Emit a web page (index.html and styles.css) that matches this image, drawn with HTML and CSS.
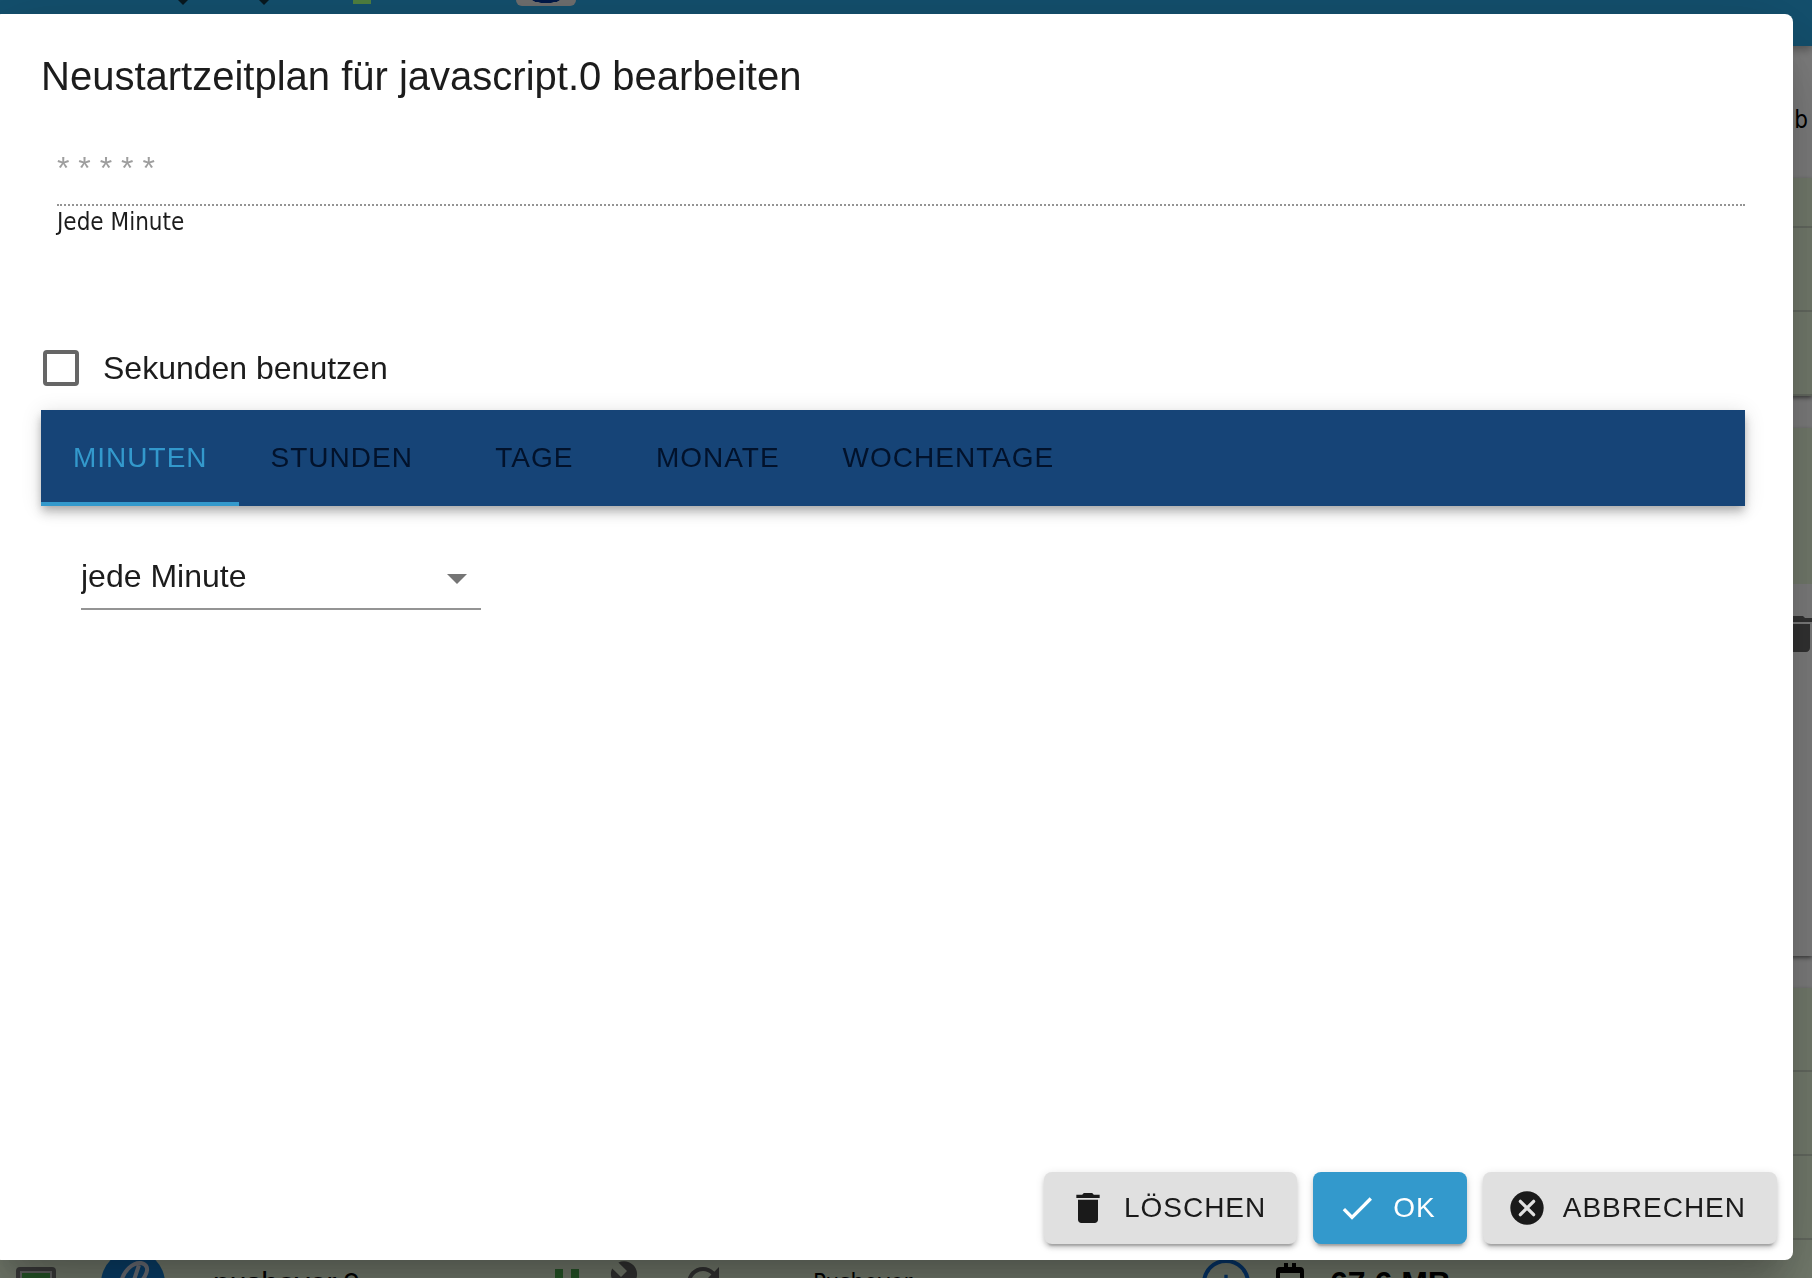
FILE: index.html
```html
<!DOCTYPE html>
<html lang="de">
<head>
  <title>Neustartzeitplan</title>
  <meta charset="UTF-8">
  <meta name="viewport" content="width=device-width, initial-scale=1">
  <link rel="stylesheet" href="styles.css">
</head>
<body>
  <!-- Instanzliste -->
  <div class="page" aria-hidden="true">
    <div class="toolbar">
      <svg class="tool-arrow" viewBox="0 0 10 5"><path d="M0 0h10L5 5z"/></svg>
      <svg class="tool-arrow" viewBox="0 0 10 5"><path d="M0 0h10L5 5z"/></svg>
      <span class="tool-status"></span>
      <span class="tool-logo"></span>
    </div>
    <div class="list-head">b</div>
    <div class="list">
      <div class="row row-short"></div>
      <div class="row"></div>
      <div class="row"></div>
    </div>
    <div class="list list-open">
      <div class="row row-tall"></div>
      <div class="row-details">
        <svg class="icon" viewBox="0 0 24 24"><path d="M6 19c0 1.1.9 2 2 2h8c1.1 0 2-.9 2-2V7H6v12zM19 4h-3.500l-1-1h-5l-1 1H5v2h14V4z"/></svg>
      </div>
    </div>
    <div class="list">
      <div class="row"></div>
      <div class="row"></div>
      <div class="row"></div>
      <div class="row instance">
        <span class="led"></span>
        <svg class="adapter-logo" viewBox="0 0 64 64">
          <circle cx="32" cy="32" r="32" fill="#1280d8"/>
          <path d="M20 32c2-12 12-21 20-20 6 1 8 6 4 13-3 6-9 9-14 9M38 14 26 50" fill="none" stroke="#dfe6f5" stroke-width="4"/>
        </svg>
        <span class="instance-name">pushover.0</span>
        <svg class="icon icon-pause" viewBox="0 0 24 24"><path d="M6 19h4V5H6v14zm8-14v14h4V5h-4z"/></svg>
        <svg class="icon" viewBox="0 0 24 24"><path d="M22.700 19l-9.100-9.100c.9-2.300.4-5-1.500-6.900-2-2-5-2.400-7.400-1.300L9 6 6 9 1.600 4.700C.4 7.100.9 10.100 2.900 12.100c1.900 1.900 4.600 2.400 6.900 1.500l9.100 9.100c.4.4 1 .4 1.400 0l2.300-2.300c.5-.4.5-1.100.1-1.400z"/></svg>
        <svg class="icon" viewBox="0 0 24 24"><path d="M17.650 6.350C16.200 4.900 14.210 4 12 4c-4.420 0-7.990 3.580-7.990 8s3.570 8 7.990 8c3.730 0 6.840-2.550 7.730-6h-2.080c-.82 2.330-3.040 4-5.650 4-3.310 0-6-2.690-6-6s2.690-6 6-6c1.660 0 3.140.69 4.220 1.780L13 11h7V4l-2.350 2.350z"/></svg>
        <span class="instance-title">Pushover</span>
        <span class="info">
          <svg viewBox="0 0 24 24"><path d="M11 7h2v2h-2zM11 11h2v6h-2z"/></svg>
        </span>
        <svg class="icon icon-memory" viewBox="0 0 24 24"><path d="M7 2h2v2h2V2h2v2h2a2 2 0 0 1 2 2v12a2 2 0 0 1-2 2H5a2 2 0 0 1-2-2V6a2 2 0 0 1 2-2h2zM5 7v11h10V7z"/></svg>
        <span class="memory">67.6 MB</span>
      </div>
    </div>
  </div>

  <!-- Dialog -->
  <div class="backdrop">
    <form class="dialog" role="dialog" aria-labelledby="dialogTitle">
      <h2 class="dialog-title" id="dialogTitle">Neustartzeitplan für javascript.0 bearbeiten</h2>

      <div class="dialog-content">
        <div class="cron-field">
          <input type="text" class="cron-input" id="cron" value="* * * * *" aria-label="Cron" aria-describedby="cronText" disabled>
          <p class="cron-text" id="cronText">Jede Minute</p>
        </div>

        <label class="seconds">
          <input type="checkbox" class="checkbox"> Sekunden benutzen
        </label>

        <div class="tabs" role="tablist">
          <button type="button" class="tab active" role="tab" aria-selected="true">MINUTEN</button>
          <button type="button" class="tab" role="tab">STUNDEN</button>
          <button type="button" class="tab" role="tab">TAGE</button>
          <button type="button" class="tab" role="tab">MONATE</button>
          <button type="button" class="tab" role="tab">WOCHENTAGE</button>
        </div>

        <div class="select">
          <select id="period" aria-label="Minuten">
            <option>jede Minute</option>
            <option>alle</option>
            <option>bestimmte</option>
          </select>
          <svg class="select-arrow" viewBox="0 0 24 24"><path d="M7 10l5 5 5-5z"/></svg>
        </div>
      </div>

      <div class="dialog-actions">
        <button type="button" class="btn">
          <svg viewBox="0 0 24 24"><path d="M6 19c0 1.100.9 2 2 2h8c1.100 0 2-.9 2-2V7H6v12zM19 4h-3.500l-1-1h-5l-1 1H5v2h14V4z"/></svg>
          LÖSCHEN
        </button>
        <button type="submit" class="btn btn-primary">
          <svg viewBox="0 0 24 24"><path d="M9 16.170L4.830 12l-1.420 1.410L9 19 21 7l-1.410-1.410z"/></svg>
          OK
        </button>
        <button type="button" class="btn">
          <svg viewBox="0 0 24 24"><circle cx="12" cy="12" r="10"/><path class="cross" d="M8 8l8 8M16 8l-8 8"/></svg>
          ABBRECHEN
        </button>
      </div>
    </form>
  </div>
</body>
</html>
```
FILE: styles.css
```css
* { box-sizing: border-box; }
body {
  margin: 0;
  height: 100vh;
  overflow: hidden;
  font-family: "Liberation Sans", Arial, Helvetica, sans-serif;
  font-size: 32px;
  color: #1c1c1c;
  background: #fff;
}
button, input, select { font: inherit; color: inherit; }

/* page behind the dialog */
.page { height: 100vh; overflow: hidden; }
.toolbar {
  display: flex;
  align-items: flex-start;
  height: 46px;
  padding-left: 178px;
  background: #27a0dc;
  box-shadow: 0 4px 8px rgba(0,0,0,.3);
}
.tool-arrow { width: 10px; height: 5px; margin-right: 71px; fill: #103040; }
.tool-status { width: 18px; height: 4px; margin-left: 13px; background: #a0ff80; }
.tool-logo {
  width: 60px;
  height: 6px;
  margin-left: 145px;
  border-radius: 0 0 8px 8px;
  background: radial-gradient(ellipse 14px 3px at 50% 0, #003090 90%, #ddd);
}
.list-head {
  height: 132px;
  padding: 54px 4px 0 0;
  text-align: right;
  font-family: "DejaVu Sans Condensed", "Noto Sans", sans-serif;
  font-size: 24px;
  line-height: 40px;
  color: #000;
}
.list { margin-bottom: 32px; box-shadow: 0 2px 4px rgba(0,0,0,.5); }
.row { height: 84px; background: #ebfade; border-bottom: 2px solid #cbd6c3; }
.row-short { height: 50px; }
.row-tall { height: 156px; border: none; }
.row-details {
  display: flex;
  justify-content: flex-end;
  height: 372px;
  padding-top: 26px;
  background: #fff;
}
.row-details .icon { margin-right: -10px; }
.icon { flex-shrink: 0; width: 48px; height: 48px; fill: #666; }
.instance {
  display: flex;
  align-items: center;
  height: 88px;
  padding-left: 16px;
}
.led {
  width: 40px;
  height: 32px;
  margin-right: 45px;
  border: 4px solid #777;
  border-radius: 4px;
  background: #4caf50;
  box-shadow: inset 0 0 0 2px #ccc;
}
.adapter-logo { width: 64px; height: 64px; margin-right: 48px; }
.instance-name { width: 330px; font-size: 30px; color: #000; }
.icon-pause { margin-right: 18px; fill: #4caf50; }
.icon + .icon { margin-right: 22px; }
.instance-title {
  width: 389px;
  margin-left: 64px;
  font-family: "DejaVu Sans Condensed", "Noto Sans", sans-serif;
  font-size: 24px;
  color: #000;
}
.info {
  width: 48px;
  height: 48px;
  border: 4px solid #0b6bd6;
  border-radius: 50%;
}
.info svg { display: block; width: 40px; height: 40px; fill: #0b6bd6; }
.icon-memory { margin: 0 12px 0 20px; fill: #000; }
.memory { font-size: 32px; font-weight: bold; color: #000; }

/* dialog */
.backdrop {
  position: fixed;
  inset: 0;
  display: flex;
  padding: 14px 19px 18px 0;
  background: rgba(0,0,0,.5);
}
.dialog {
  display: flex;
  flex: 1;
  flex-direction: column;
  margin-left: -7px;
  border-radius: 8px;
  background: #fff;
  box-shadow: 0 22px 30px -14px rgba(0,0,0,.2), 0 48px 76px 6px rgba(0,0,0,.14), 0 18px 92px 16px rgba(0,0,0,.12);
}
.dialog-title {
  margin: 0;
  padding: 30px 48px 32px;
  font-size: 40px;
  font-weight: normal;
  line-height: 64px;
}
.dialog-content { flex: 1; padding: 0 48px; }
.cron-field { margin-bottom: 88px; padding-left: 16px; }
.cron-input {
  display: block;
  width: 100%;
  height: 66px;
  padding: 8px 0 16px;
  border: none;
  border-bottom: 2px dotted #949494;
  background: none;
  color: #9e9e9e;
}
.cron-text {
  margin: 0;
  font-family: "DejaVu Sans Condensed", "Noto Sans", sans-serif;
  font-size: 24px;
  line-height: 32px;
}
.seconds { display: flex; align-items: center; gap: 24px; height: 84px; padding-left: 2px; }
.checkbox {
  appearance: none;
  width: 36px;
  height: 36px;
  margin: 0;
  border: 4px solid #666;
  border-radius: 4px;
}
.checkbox:checked { background: #39c; border-color: #39c; }
.tabs {
  display: flex;
  height: 96px;
  background: #164477;
  box-shadow: 0 4px 8px -2px rgba(0,0,0,.2), 0 8px 10px rgba(0,0,0,.14), 0 2px 20px rgba(0,0,0,.12);
}
.tab {
  min-width: 180px;
  padding: 4px 31px 0 32px;
  border: none;
  border-bottom: 4px solid transparent;
  background: none;
  font-size: 28px;
  letter-spacing: 1px;
  color: #02122b;
  cursor: pointer;
}
.tab.active { color: #39c; border-color: #39c; }
.select { display: grid; width: 400px; margin: 40px 0 0 40px; align-items: center; }
.select select, .select-arrow { grid-area: 1 / 1; }
.select select {
  appearance: none;
  width: 100%;
  height: 64px;
  padding: 12px 48px 14px 0;
  border: none;
  border-bottom: 2px solid #949494;
  border-radius: 0;
  background: none;
}
.select-arrow { width: 48px; height: 48px; justify-self: end; fill: #757575; pointer-events: none; }
.dialog-actions { display: flex; justify-content: flex-end; gap: 16px; padding: 16px; }
.btn {
  display: flex;
  align-items: center;
  gap: 16px;
  height: 72px;
  padding: 0 31px 0 24px;
  border: none;
  border-radius: 8px;
  background: #e0e0e0;
  box-shadow: 0 6px 2px -4px rgba(0,0,0,.2), 0 4px 4px rgba(0,0,0,.14), 0 2px 10px rgba(0,0,0,.12);
  font-size: 28px;
  letter-spacing: 1px;
  color: #1a1a1a;
  cursor: pointer;
}
.btn svg { width: 40px; height: 40px; fill: currentColor; }
.btn .cross { stroke: #e0e0e0; stroke-width: 2; stroke-linecap: round; }
.btn-primary { background: #39c; color: #fff; }
```
